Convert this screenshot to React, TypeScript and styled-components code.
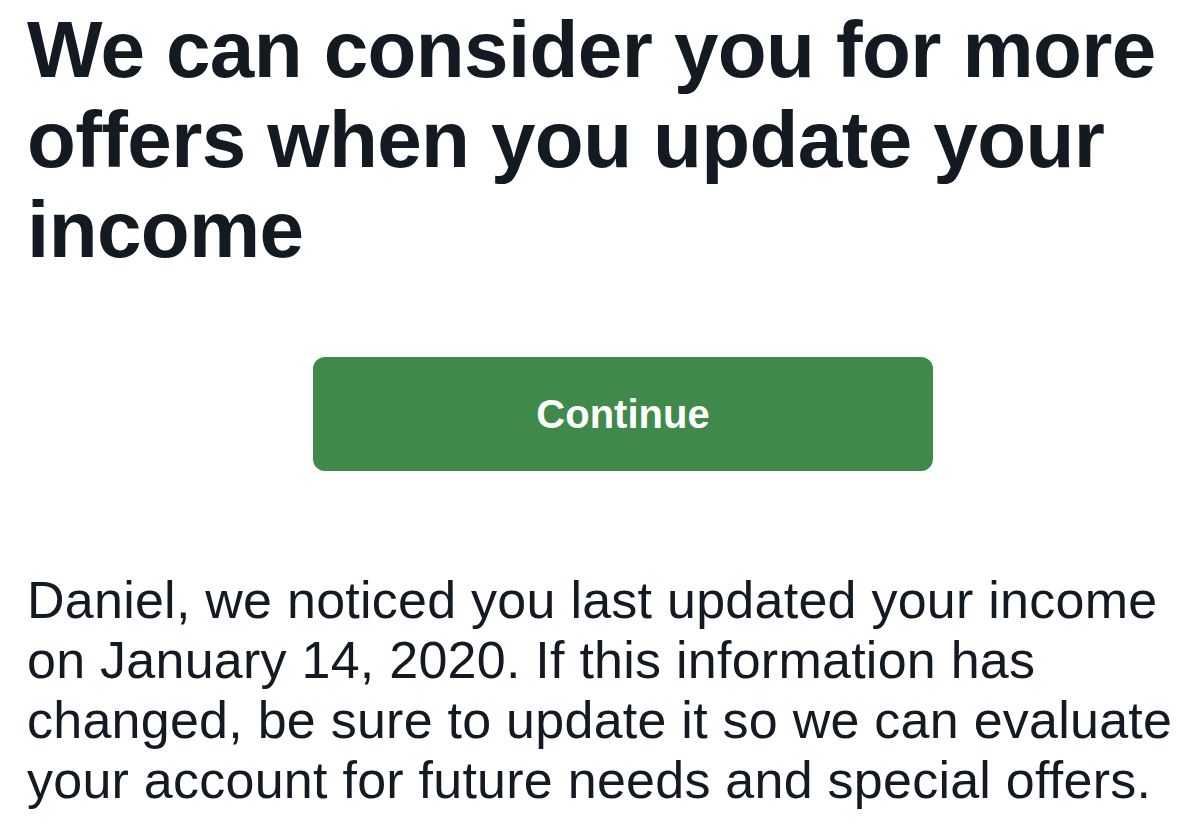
import React from "react";
import styled, { createGlobalStyle } from "styled-components";

const Global = createGlobalStyle`
  html, body { margin: 0; padding: 0; background: #ffffff; }
  body { font-family: "Liberation Sans", Arial, sans-serif; color: #141a22; }
`;

const Page = styled.main`
  display: flex;
  flex-direction: column;
  padding: 5px 0 0 27px;
  width: 1200px;
  box-sizing: border-box;
`;

const Heading = styled.h1`
  margin: 0;
  font-size: 80px;
  line-height: 90px;
  font-weight: 700;
  letter-spacing: -0.6px;
  color: #141a22;
`;

const ButtonRow = styled.div`
  display: flex;
  padding-left: 286px;
  margin-top: 82px;
`;

const PrimaryButton = styled.button`
  width: 620px;
  height: 114px;
  border: none;
  border-radius: 12px;
  background: #3f8a4b;
  color: #ffffff;
  font-family: "Liberation Sans", Arial, sans-serif;
  font-size: 40px;
  font-weight: 700;
  cursor: pointer;
`;

const Body = styled.p`
  margin: 99px 0 0 0;
  font-size: 52px;
  line-height: 60px;
  letter-spacing: 0.25px;
  color: #141a22;
`;

export default function App() {
  return (
    <>
      <Global />
      <Page>
        <Heading>
          We can consider you for more
          <br />
          offers when you update your
          <br />
          income
        </Heading>
        <ButtonRow>
          <PrimaryButton>Continue</PrimaryButton>
        </ButtonRow>
        <Body>
          Daniel, we noticed you last updated your income
          <br />
          on January 14, 2020. If this information has
          <br />
          changed, be sure to update it so we can evaluate
          <br />
          your account for future needs and special offers.
        </Body>
      </Page>
    </>
  );
}
